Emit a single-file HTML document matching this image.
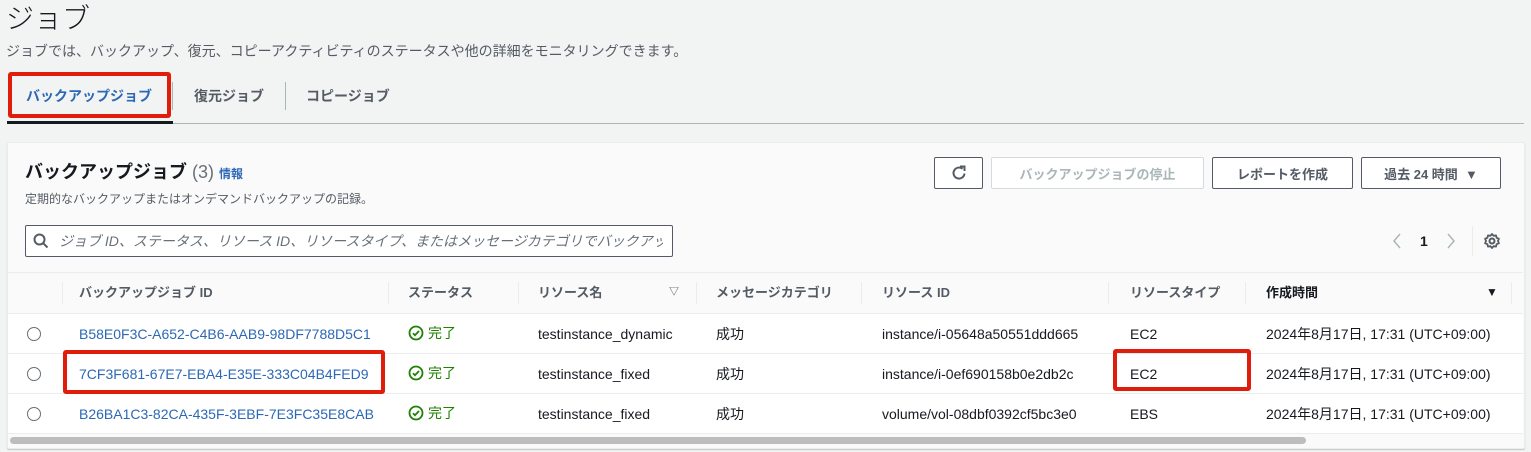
<!DOCTYPE html>
<html><head><meta charset="utf-8"><style>
*{box-sizing:border-box;margin:0;padding:0}
body{width:1531px;height:452px;background:#f2f3f3;font-family:"Liberation Sans","Noto Sans CJK JP",sans-serif;color:#16191f;position:relative;overflow:hidden}
.a{position:absolute;white-space:nowrap}
.btn{position:absolute;top:157px;height:32px;border:1px solid #545b64;border-radius:2px;background:#fff;font-size:13px;font-weight:bold;color:#545b64;display:flex;align-items:center;justify-content:center}
.hd{position:absolute;top:272px;height:41px;font-size:13px;font-weight:bold;color:#545b64;line-height:41px}
.sep{position:absolute;width:1px;background:#eaeded;top:282px;height:22px}
.row{position:absolute;left:8px;width:1515px;height:40px;background:#fff;border-top:1px solid #eaeded}
.c{position:absolute;font-size:14px;line-height:40px;white-space:nowrap}
.radio{position:absolute;left:19px;top:13px;width:14px;height:14px;border:1.5px solid #687078;border-radius:50%}
.lnk{color:#2c68b5}
.red{position:absolute;border:4px solid #e01c0a;border-radius:3px}
.ok{color:#1d8102}
</style></head><body>
<div class="a" style="left:6px;top:2px;font-size:28px;line-height:34px;font-weight:300">ジョブ</div>
<div class="a" style="left:6px;top:42px;font-size:14px;color:#545b64;line-height:18px">ジョブでは、バックアップ、復元、コピーアクティビティのステータスや他の詳細をモニタリングできます。</div>
<div class="a" style="left:26px;top:86px;font-size:14px;font-weight:bold;color:#2c68b5;line-height:20px">バックアップジョブ</div>
<div class="a" style="left:172px;top:82px;width:1px;height:28px;background:#aab7b8"></div>
<div class="a" style="left:194px;top:86px;font-size:14px;font-weight:bold;color:#545b64;line-height:20px">復元ジョブ</div>
<div class="a" style="left:285px;top:82px;width:1px;height:28px;background:#aab7b8"></div>
<div class="a" style="left:306px;top:86px;font-size:14px;font-weight:bold;color:#545b64;line-height:20px">コピージョブ</div>
<div class="a" style="left:7px;top:123px;width:1517px;height:1px;background:#aab7b8"></div>
<div class="a" style="left:7px;top:121px;width:166px;height:3px;background:#16191f"></div>
<div class="red" style="left:8px;top:72px;width:163px;height:46px"></div>

<div class="a" style="left:7px;top:142px;width:1518px;height:307px;background:#fafafa;border:1px solid #eaeded;border-radius:2px;box-shadow:0 1px 1px rgba(0,28,36,.2)"></div>
<div class="a" style="left:25px;top:159px;font-size:18px;font-weight:bold;line-height:26px">バックアップジョブ <span style="font-weight:normal;color:#687078">(3)</span> <span style="font-size:12px;color:#2c68b5">情報</span></div>
<div class="a" style="left:25px;top:191px;font-size:12px;color:#545b64;line-height:16px">定期的なバックアップまたはオンデマンドバックアップの記録。</div>

<div class="btn" style="left:934px;width:49px"><svg width="18" height="18" viewBox="0 0 18 18"><path d="M14.5 9.5A5.5 5.5 0 1 1 12.5 4.8" fill="none" stroke="#545b64" stroke-width="2"/><path d="M10 2.5h4.5v4.5" fill="none" stroke="#545b64" stroke-width="2"/></svg></div>
<div class="btn" style="left:991px;width:213px;border-color:#d5dbdb;color:#aab7b8">バックアップジョブの停止</div>
<div class="btn" style="left:1212px;width:141px">レポートを作成</div>
<div class="btn" style="left:1361px;width:140px">過去 24 時間 &nbsp;▼</div>

<div class="a" style="left:25px;top:225px;width:648px;height:32px;border:1px solid #545b64;border-radius:2px;background:#fff"></div>
<svg class="a" style="left:33px;top:233px" width="16" height="16" viewBox="0 0 16 16"><circle cx="6.5" cy="6.5" r="5" fill="none" stroke="#545b64" stroke-width="2"/><path d="M10.3 10.3L14.5 14.5" stroke="#545b64" stroke-width="2"/></svg>
<div class="a" style="left:59px;top:232px;width:604px;overflow:hidden;font-size:14px;font-style:italic;color:#687078;line-height:18px">ジョブ ID、ステータス、リソース ID、リソースタイプ、またはメッセージカテゴリでバックアップジョブをフィルタリング</div>

<svg class="a" style="left:1391px;top:233px" width="12" height="16" viewBox="0 0 12 16"><path d="M9 1L3 8l6 7" fill="none" stroke="#aab7b8" stroke-width="1.5"/></svg>
<div class="a" style="left:1420px;top:232px;font-size:14px;font-weight:bold;line-height:18px">1</div>
<svg class="a" style="left:1445px;top:233px" width="12" height="16" viewBox="0 0 12 16"><path d="M3 1l6 7-6 7" fill="none" stroke="#aab7b8" stroke-width="1.5"/></svg>
<div class="a" style="left:1472px;top:226px;width:1px;height:30px;background:#eaeded"></div>
<svg class="a" style="left:1483px;top:232px" width="18" height="18" viewBox="0 0 18 18"><circle cx="9" cy="9" r="2.5" fill="none" stroke="#545b64" stroke-width="2"/><path d="M9 2l1.6 1.8 2.4-.4.6 2.4 2.3.9-.9 2.3.9 2.3-2.3.9-.6 2.4-2.4-.4L9 16l-1.6-1.8-2.4.4-.6-2.4-2.3-.9.9-2.3-.9-2.3 2.3-.9.6-2.4 2.4.4z" fill="none" stroke="#545b64" stroke-width="1.8" stroke-linejoin="round"/></svg>

<div class="a" style="left:8px;top:272px;width:1515px;height:1px;background:#eaeded"></div>
<div class="sep" style="left:62px"></div>
<div class="hd" style="left:79px">バックアップジョブ ID</div>
<div class="sep" style="left:388px"></div>
<div class="hd" style="left:408px">ステータス</div>
<div class="sep" style="left:518px"></div>
<div class="hd" style="left:538px">リソース名</div>
<div class="hd" style="left:669px;font-size:10px">▽</div>
<div class="sep" style="left:696px"></div>
<div class="hd" style="left:716px">メッセージカテゴリ</div>
<div class="sep" style="left:861px"></div>
<div class="hd" style="left:882px">リソース ID</div>
<div class="sep" style="left:1108px"></div>
<div class="hd" style="left:1130px">リソースタイプ</div>
<div class="sep" style="left:1245px"></div>
<div class="hd" style="left:1266px;color:#16191f">作成時間</div>
<div class="hd" style="left:1486px;color:#16191f;font-size:12px">▼</div>
<div class="sep" style="left:1511px"></div>

<div class="row" style="top:313px">
<div class="radio"></div>
<div class="c lnk" style="left:71px">B58E0F3C-A652-C4B6-AAB9-98DF7788D5C1</div>
<div class="c" style="left:530px">testinstance_dynamic</div>
<div class="c" style="left:708px">成功</div>
<div class="c" style="left:874px">instance/i-05648a50551ddd665</div>
<div class="c" style="left:1122px">EC2</div>
<div class="c" style="left:1258px">2024年8月17日, 17:31 (UTC+09:00)</div>
</div>
<div class="row" style="top:353px">
<div class="radio"></div>
<div class="c lnk" style="left:71px">7CF3F681-67E7-EBA4-E35E-333C04B4FED9</div>
<div class="c" style="left:530px">testinstance_fixed</div>
<div class="c" style="left:708px">成功</div>
<div class="c" style="left:874px">instance/i-0ef690158b0e2db2c</div>
<div class="c" style="left:1122px">EC2</div>
<div class="c" style="left:1258px">2024年8月17日, 17:31 (UTC+09:00)</div>
</div>
<div class="row" style="top:393px">
<div class="radio"></div>
<div class="c lnk" style="left:71px">B26BA1C3-82CA-435F-3EBF-7E3FC35E8CAB</div>
<div class="c" style="left:530px">testinstance_fixed</div>
<div class="c" style="left:708px">成功</div>
<div class="c" style="left:874px">volume/vol-08dbf0392cf5bc3e0</div>
<div class="c" style="left:1122px">EBS</div>
<div class="c" style="left:1258px">2024年8月17日, 17:31 (UTC+09:00)</div>
</div>
<div class="a" style="left:8px;top:433px;width:1515px;height:1px;background:#eaeded"></div>

<svg class="a" style="left:408px;top:325px" width="16" height="16" viewBox="0 0 16 16"><circle cx="8" cy="8" r="6.5" fill="none" stroke="#1d8102" stroke-width="1.8"/><path d="M5 8.2l2 2 4-4.2" fill="none" stroke="#1d8102" stroke-width="1.8"/></svg>
<div class="a ok" style="left:428px;top:323px;font-size:14px;line-height:20px">完了</div>
<svg class="a" style="left:408px;top:365px" width="16" height="16" viewBox="0 0 16 16"><circle cx="8" cy="8" r="6.5" fill="none" stroke="#1d8102" stroke-width="1.8"/><path d="M5 8.2l2 2 4-4.2" fill="none" stroke="#1d8102" stroke-width="1.8"/></svg>
<div class="a ok" style="left:428px;top:363px;font-size:14px;line-height:20px">完了</div>
<svg class="a" style="left:408px;top:405px" width="16" height="16" viewBox="0 0 16 16"><circle cx="8" cy="8" r="6.5" fill="none" stroke="#1d8102" stroke-width="1.8"/><path d="M5 8.2l2 2 4-4.2" fill="none" stroke="#1d8102" stroke-width="1.8"/></svg>
<div class="a ok" style="left:428px;top:403px;font-size:14px;line-height:20px">完了</div>

<div class="a" style="left:10px;top:437px;width:1296px;height:7px;background:#bdbdbd;border-radius:4px"></div>

<div class="red" style="left:63px;top:350px;width:322px;height:44px"></div>
<div class="red" style="left:1113px;top:349px;width:138px;height:42px"></div>
</body></html>
